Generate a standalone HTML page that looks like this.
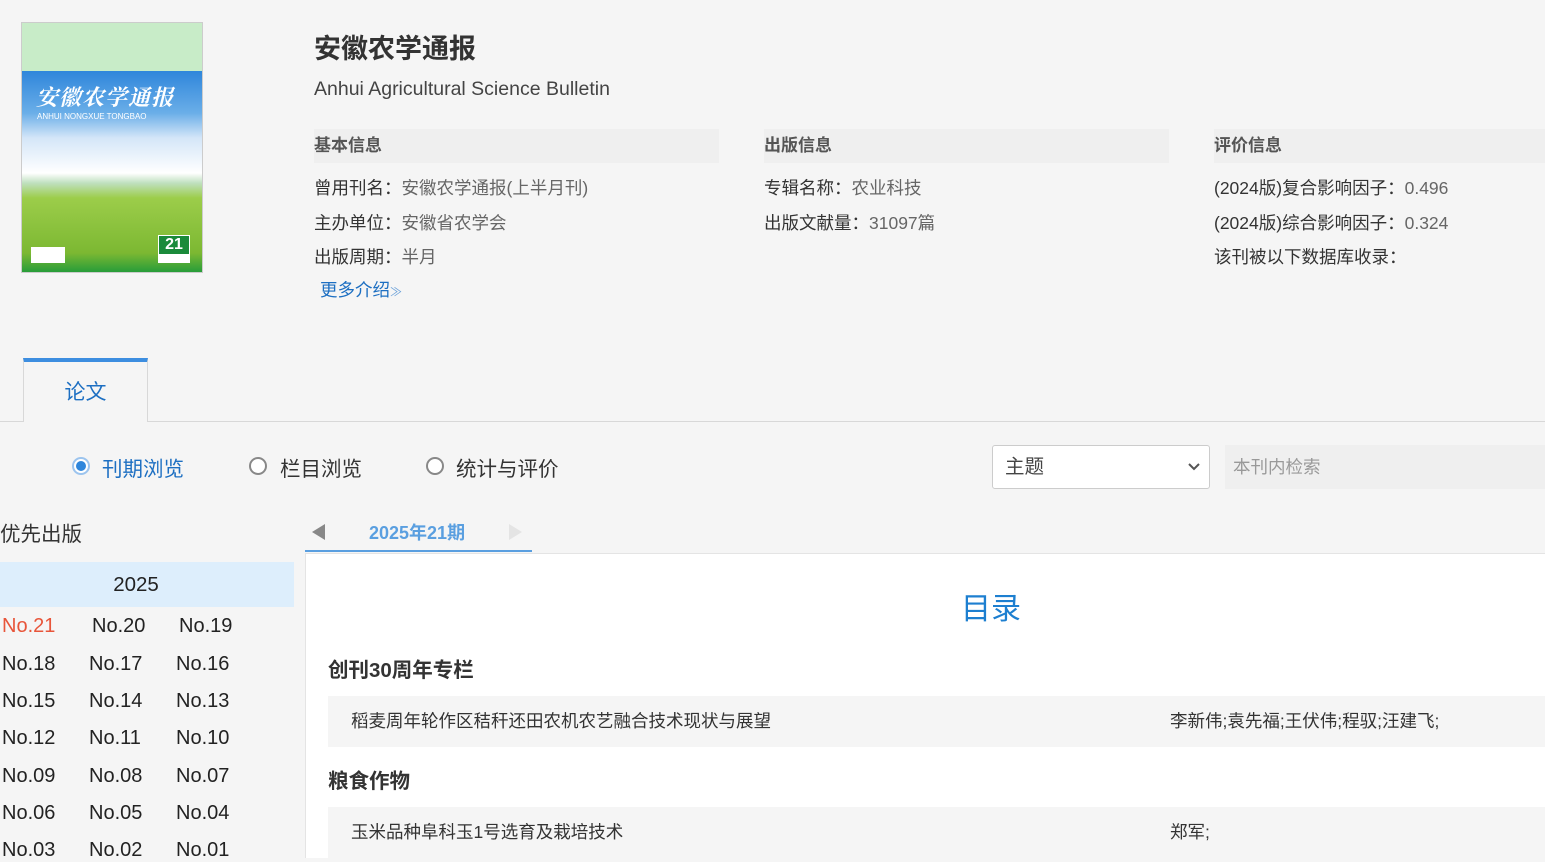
<!DOCTYPE html>
<html><head><meta charset="utf-8"><style>
*{margin:0;padding:0;box-sizing:border-box}
body{width:1545px;height:858px;overflow:hidden;background:#f5f5f5;font-family:"Liberation Sans","Noto Sans CJK SC",sans-serif;color:#333;position:relative}
.a{position:absolute;white-space:nowrap}
.hd{background:#efefef;height:34px;font-weight:bold;font-size:17px;line-height:34px;color:#555}
.r{font-size:17.5px;color:#333}
.r span{color:#666}
.no{font-size:20px;color:#222}
</style></head><body>
<!-- cover -->
<div class="a" style="left:21px;top:22px;width:182px;height:251px;border:1px solid #ccc;overflow:hidden;background:linear-gradient(#c8ecc8 0,#c8ecc8 48px,#2f86db 48px,#6aaee8 90px,#d4e6f8 115px,#fff 150px,#bfe0bf 160px,#9ccd4a 175px,#7cb832 230px,#1f9a3a 251px)">
<div class="a" style="left:14px;top:58px;color:#fff;font-size:22px;font-weight:bold;font-style:italic;letter-spacing:1px;font-family:'Noto Serif CJK SC',serif">安徽农学通报</div>
<div class="a" style="left:15px;top:89px;color:#fff;font-size:8px">ANHUI NONGXUE TONGBAO</div>
<div class="a" style="left:136px;top:212px;width:32px;height:28px;background:#fff"><div style="background:#1a8a3a;color:#fff;font-weight:bold;font-size:16px;text-align:center;margin:1px;line-height:18px">21</div></div>
<div class="a" style="left:9px;top:224px;width:34px;height:16px;background:#fff"></div>
</div>
<div class="a" style="left:314px;top:27px;font-size:27px;font-weight:bold;color:#333">安徽农学通报</div>
<div class="a" style="left:314px;top:78px;font-size:19.5px;color:#444">Anhui Agricultural Science Bulletin</div>
<div class="a hd" style="left:314px;top:129px;width:405px">基本信息</div>
<div class="a hd" style="left:764px;top:129px;width:405px">出版信息</div>
<div class="a hd" style="left:1214px;top:129px;width:331px">评价信息</div>
<div class="a r" style="left:314px;top:175px">曾用刊名：<span>安徽农学通报(上半月刊)</span></div>
<div class="a r" style="left:314px;top:210px">主办单位：<span>安徽省农学会</span></div>
<div class="a r" style="left:314px;top:244px">出版周期：<span>半月</span></div>
<div class="a" style="left:320px;top:277px;font-size:17.5px;color:#1d6fc2">更多介绍<span style="font-size:12px;color:#6aa0d8">≫</span></div>
<div class="a r" style="left:764px;top:175px">专辑名称：<span>农业科技</span></div>
<div class="a r" style="left:764px;top:210px">出版文献量：<span>31097篇</span></div>
<div class="a r" style="left:1214px;top:175px">(2024版)复合影响因子：<span>0.496</span></div>
<div class="a r" style="left:1214px;top:210px">(2024版)综合影响因子：<span>0.324</span></div>
<div class="a r" style="left:1214px;top:244px">该刊被以下数据库收录：</div>
<!-- tab -->
<div class="a" style="left:0;top:421px;width:1545px;height:1px;background:#d8d8d8"></div>
<div class="a" style="left:23px;top:358px;width:125px;height:64px;border:1px solid #d8d8d8;border-top:4px solid #3d8ee0;border-bottom:none;background:#f5f5f5;text-align:center;line-height:62px;font-size:21px;color:#1d6fc2">论文</div>
<!-- radios -->
<div class="a" style="left:72px;top:457px;width:18px;height:18px;border-radius:50%;border:2px solid #9cc4ee;background:#fff"><div style="width:10px;height:10px;border-radius:50%;background:#2f86db;margin:2px"></div></div>
<div class="a" style="left:102px;top:452px;font-size:20.5px;color:#1d6fc2">刊期浏览</div>
<div class="a" style="left:249px;top:457px;width:18px;height:18px;border-radius:50%;border:2px solid #888;background:#fff"></div>
<div class="a" style="left:280px;top:452px;font-size:20.5px;color:#333">栏目浏览</div>
<div class="a" style="left:426px;top:457px;width:18px;height:18px;border-radius:50%;border:2px solid #888;background:#fff"></div>
<div class="a" style="left:456px;top:452px;font-size:20.5px;color:#333">统计与评价</div>
<div class="a" style="left:992px;top:445px;width:218px;height:44px;border:1px solid #ccc;border-radius:3px;background:#fff;font-size:19.5px;line-height:42px;padding-left:12px;color:#444">主题
<svg style="position:absolute;right:8px;top:16px" width="14" height="10" viewBox="0 0 14 10"><path d="M2 2l5 5 5-5" stroke="#555" stroke-width="2" fill="none"/></svg></div>
<div class="a" style="left:1225px;top:445px;width:320px;height:44px;background:#efefef;font-size:17.5px;line-height:44px;padding-left:8px;color:#999">本刊内检索</div>
<!-- left list -->
<div class="a" style="left:0;top:517px;font-size:20.5px;color:#333">优先出版</div>
<div class="a" style="left:0;top:562px;width:294px;height:45px;background:#ddeefc;text-align:center;line-height:45px;font-size:20.5px;color:#222;padding-right:22px">2025</div>
<div class="a no" style="left:2px;top:615px;color:#e8553a">No.21</div><div class="a no" style="left:92px;top:615px">No.20</div><div class="a no" style="left:179px;top:615px">No.19</div>
<div class="a no" style="left:2px;top:653px">No.18</div><div class="a no" style="left:89px;top:653px">No.17</div><div class="a no" style="left:176px;top:653px">No.16</div>
<div class="a no" style="left:2px;top:690px">No.15</div><div class="a no" style="left:89px;top:690px">No.14</div><div class="a no" style="left:176px;top:690px">No.13</div>
<div class="a no" style="left:2px;top:727px">No.12</div><div class="a no" style="left:89px;top:727px">No.11</div><div class="a no" style="left:176px;top:727px">No.10</div>
<div class="a no" style="left:2px;top:765px">No.09</div><div class="a no" style="left:89px;top:765px">No.08</div><div class="a no" style="left:176px;top:765px">No.07</div>
<div class="a no" style="left:2px;top:802px">No.06</div><div class="a no" style="left:89px;top:802px">No.05</div><div class="a no" style="left:176px;top:802px">No.04</div>
<div class="a no" style="left:2px;top:839px">No.03</div><div class="a no" style="left:89px;top:839px">No.02</div><div class="a no" style="left:176px;top:839px">No.01</div>
<!-- issue nav -->
<svg class="a" style="left:311px;top:523px" width="16" height="18"><path d="M14 1L1 9l13 8z" fill="#888"/></svg>
<div class="a" style="left:369px;top:519px;font-size:18px;font-weight:bold;color:#5a9fe0">2025年21期</div>
<svg class="a" style="left:507px;top:523px" width="16" height="18"><path d="M2 1l13 8L2 17z" fill="#e4e4e4"/></svg>
<div class="a" style="left:305px;top:550px;width:227px;height:2px;background:#5a9fe0"></div>
<div class="a" style="left:305px;top:553px;width:1240px;height:305px;background:#fff;border-top:1px solid #e4e4e4;border-left:1px solid #e4e4e4"></div>
<div class="a" style="left:961px;top:584px;font-size:30px;color:#1d7fd0">目录</div>
<div class="a" style="left:328px;top:653px;font-size:20.5px;font-weight:bold;color:#333">创刊30周年专栏</div>
<div class="a" style="left:328px;top:696px;width:1217px;height:51px;background:#f5f5f5"></div>
<div class="a" style="left:351px;top:708px;font-size:17.5px;color:#333">稻麦周年轮作区秸秆还田农机农艺融合技术现状与展望</div>
<div class="a" style="left:1170px;top:708px;font-size:17.5px;color:#333">李新伟;袁先福;王伏伟;程驭;汪建飞;</div>
<div class="a" style="left:328px;top:764px;font-size:20.5px;font-weight:bold;color:#333">粮食作物</div>
<div class="a" style="left:328px;top:807px;width:1217px;height:51px;background:#f5f5f5"></div>
<div class="a" style="left:351px;top:819px;font-size:17.5px;color:#333">玉米品种阜科玉1号选育及栽培技术</div>
<div class="a" style="left:1170px;top:819px;font-size:17.5px;color:#333">郑军;</div>
</body></html>
